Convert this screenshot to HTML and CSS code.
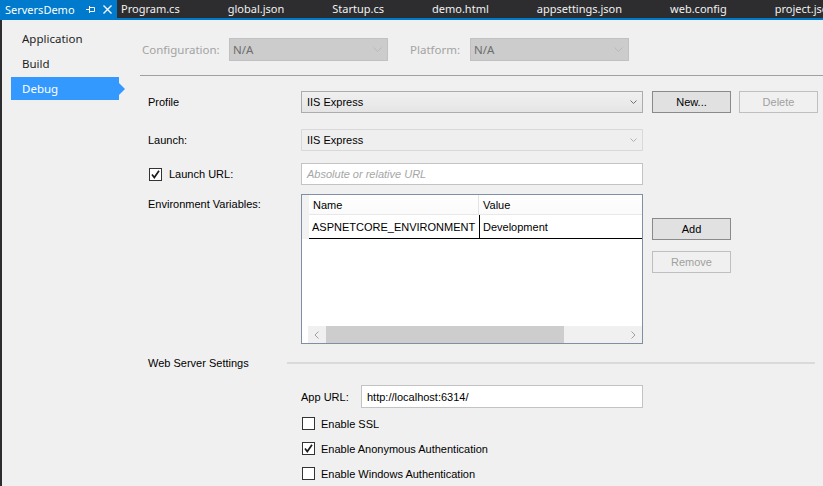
FILE: index.html
```html
<!DOCTYPE html>
<html>
<head>
<meta charset="utf-8">
<link rel="stylesheet" href="styles.css">
</head>
<body>
<div class="tabs">
  <div class="tab active">
    <span class="tab-title">ServersDemo</span>
    <svg class="pin" width="9" height="9" viewBox="0 0 9 9"><path d="M0 4.5H3.5M3.5 1V8M3.5 2.5H8.5V6.5H3.5" stroke="#fff" fill="none" stroke-width="1"/></svg>
    <svg class="close" width="9" height="9" viewBox="0 0 9 9"><path d="M0.5 0.5L8.5 8.5M8.5 0.5L0.5 8.5" stroke="#fff" stroke-width="1.3"/></svg>
  </div>
  <div class="tab">Program.cs</div>
  <div class="tab">global.json</div>
  <div class="tab">Startup.cs</div>
  <div class="tab">demo.html</div>
  <div class="tab">appsettings.json</div>
  <div class="tab">web.config</div>
  <div class="tab">project.json</div>
</div>
<div class="main">
  <nav class="nav">
    <div class="nav-item">Application</div>
    <div class="nav-item">Build</div>
    <div class="nav-item selected">Debug</div>
  </nav>
  <div class="page">
    <div class="config">
      <span class="cfg-label cfg-conf">Configuration:</span>
      <div class="combo-dis cfg-combo1"><span>N/A</span><svg width="9" height="5" viewBox="0 0 9 5"><path d="M0.5 0.5L4.5 4.5L8.5 0.5" stroke="#b9b9b9" fill="none"/></svg></div>
      <span class="cfg-label cfg-plat">Platform:</span>
      <div class="combo-dis cfg-combo2"><span>N/A</span><svg width="9" height="5" viewBox="0 0 9 5"><path d="M0.5 0.5L4.5 4.5L8.5 0.5" stroke="#b9b9b9" fill="none"/></svg></div>
    </div>
    <div class="sep"></div>
    <div class="form">
      <div class="row row-profile">
        <span class="lbl">Profile</span>
        <div class="combo"><span>IIS Express</span><svg width="7" height="4" viewBox="0 0 7 4"><path d="M0.5 0.5L3.5 3.5L6.5 0.5" stroke="#707070" fill="none"/></svg></div>
        <div class="btn btn-default">New...</div>
        <div class="btn btn-disabled btn-second">Delete</div>
      </div>
      <div class="row row-launch">
        <span class="lbl">Launch:</span>
        <div class="combo combo-ro"><span>IIS Express</span><svg width="7" height="4" viewBox="0 0 7 4"><path d="M0.5 0.5L3.5 3.5L6.5 0.5" stroke="#b0b0b0" fill="none"/></svg></div>
      </div>
      <div class="row row-url">
        <div class="lbl lbl-check">
          <span class="check on"><svg width="11" height="11" viewBox="0 0 11 11"><path d="M2 5.5L4.3 8.5L9 1.8" stroke="#1a1a1a" stroke-width="1.7" fill="none"/></svg></span>
          <span>Launch URL:</span>
        </div>
        <div class="textbox placeholder">Absolute or relative URL</div>
      </div>
      <div class="row row-env">
        <span class="lbl lbl-env">Environment Variables:</span>
        <div class="grid">
          <div class="ghead">
            <div class="rh"></div>
            <div class="gh gh-name">Name</div>
            <div class="gh gh-value">Value</div>
          </div>
          <div class="grow">
            <div class="rh"></div>
            <div class="gc gc-name">ASPNETCORE_ENVIRONMENT</div>
            <div class="gc gc-value">Development</div>
          </div>
          <div class="gspace"></div>
          <div class="hscroll">
            <div class="sarrow"><svg width="5" height="8" viewBox="0 0 5 8"><path d="M4.5 0.5L1 4L4.5 7.5" stroke="#a0a0a0" fill="none"/></svg></div>
            <div class="sthumb"></div>
            <div class="strack"></div>
            <div class="sarrow"><svg width="5" height="8" viewBox="0 0 5 8"><path d="M0.5 0.5L4 4L0.5 7.5" stroke="#a0a0a0" fill="none"/></svg></div>
          </div>
        </div>
        <div class="btn-col">
          <div class="btn btn-default">Add</div>
          <div class="btn btn-disabled">Remove</div>
        </div>
      </div>
      <div class="row row-ws">
        <span class="lbl lbl-ws">Web Server Settings</span>
        <div class="ws-line"></div>
      </div>
      <div class="row row-appurl">
        <span class="appurl-label">App URL:</span>
        <div class="textbox appurl">http://localhost:6314/</div>
      </div>
      <div class="row row-cb cb-ssl">
        <span class="check"></span><span class="cb-text">Enable SSL</span>
      </div>
      <div class="row row-cb cb-anon">
        <span class="check on"><svg width="11" height="11" viewBox="0 0 11 11"><path d="M2 5.5L4.3 8.5L9 1.8" stroke="#1a1a1a" stroke-width="1.7" fill="none"/></svg></span><span class="cb-text">Enable Anonymous Authentication</span>
      </div>
      <div class="row row-cb cb-win">
        <span class="check"></span><span class="cb-text">Enable Windows Authentication</span>
      </div>
    </div>
  </div>
</div>
</body>
</html>
```
FILE: styles.css
```css
* { box-sizing: border-box; }
html, body { margin: 0; padding: 0; }
body {
  width: 823px;
  height: 486px;
  overflow: hidden;
  background: #f0f0f0;
  font-family: "Liberation Sans", Arial, sans-serif;
  font-size: 11px;
  color: #000;
}

/* tab bar */
.tabs {
  display: flex;
  height: 20px;
  background: #2d2d30;
  border-bottom: 2px solid #007acc;
  font-family: "Noto Sans", sans-serif;
  font-size: 11px;
  color: #f1f1f1;
  line-height: 17px;
  white-space: nowrap;
  overflow: hidden;
}
.tab {
  padding: 0 44px 0 4px;
  flex: none;
}
.tab.active {
  width: 117px;
  background: #007acc;
  color: #fff;
  padding: 0 0 0 5px;
  display: flex;
  align-items: center;
}
.tab-title { width: 81px; }
.pin { margin-right: 8px; }

/* main area */
.main {
  display: flex;
  height: 466px;
  border-left: 2px solid #2d2d30;
}
.nav {
  width: 128px;
  flex: none;
  padding-top: 7px;
  font-family: "Noto Sans", sans-serif;
  font-size: 11.5px;
  color: #1e1e1e;
}
.nav-item {
  margin-left: 9px;
  width: 108px;
  height: 23px;
  line-height: 23px;
  padding-left: 11px;
  margin-bottom: 2px;
  position: relative;
}
.nav-item.selected {
  background: #3399ff;
  color: #fff;
}
.nav-item.selected::after {
  content: "";
  position: absolute;
  right: -6px;
  top: 6px;
  border-left: 6px solid #3399ff;
  border-top: 6px solid transparent;
  border-bottom: 6px solid transparent;
}

.page {
  flex: 1;
  padding-left: 10px;
}

/* configuration row */
.config {
  display: flex;
  align-items: center;
  margin-top: 18px;
  height: 23px;
  font-family: "Noto Sans", sans-serif;
  font-size: 11.5px;
}
.cfg-label { color: #a3a3a3; }
.cfg-conf { margin-left: 2px; width: 87px; }
.cfg-plat { margin-left: 22px; width: 60px; }
.combo-dis {
  height: 23px;
  background: #cccccc;
  border: 1px solid #c1c1c1;
  display: flex;
  align-items: center;
  justify-content: space-between;
  padding: 0 5px 0 3px;
  color: #6d6d6d;
}
.cfg-combo1 { width: 159px; }
.cfg-combo2 { width: 159px; }

.sep {
  margin-top: 14px;
  border-top: 1px solid #a0a0a0;
}

/* form */
.form { padding-left: 8px; }
.row {
  display: flex;
  align-items: center;
}
.lbl { width: 153px; flex: none; }
.row-profile { margin-top: 15px; height: 22px; }
.combo {
  width: 342px;
  height: 22px;
  border: 1px solid #acacac;
  background: linear-gradient(#f0f0f0, #e5e5e5);
  display: flex;
  align-items: center;
  justify-content: space-between;
  padding: 0 5px 0 5px;
}
.combo-ro {
  background: #efefef;
  border-color: #d9d9d9;
}
.btn {
  width: 79px;
  height: 22px;
  display: flex;
  align-items: center;
  justify-content: center;
  border: 1px solid #adadad;
  background: #e1e1e1;
  margin-left: 9px;
}
.btn-default { border-color: #8a8a8a; }
.btn-disabled {
  background: #f0f0f0;
  border-color: #bfbfbf;
  color: #a0a0a0;
}
.btn-second { margin-left: 8px; }

.row-launch { margin-top: 16px; height: 22px; }

.row-url { margin-top: 12px; height: 22px; }
.lbl-check { display: flex; align-items: center; }
.check {
  width: 13px;
  height: 13px;
  border: 1px solid #333;
  background: #fff;
  display: inline-flex;
  align-items: center;
  justify-content: center;
  flex: none;
}
.lbl-check .check { margin-left: 1px; margin-right: 7px; }
.textbox {
  width: 342px;
  height: 22px;
  border: 1px solid #c3c3c3;
  background: #fff;
  display: flex;
  align-items: center;
  padding-left: 5px;
}
.placeholder { color: #a6a6a6; font-style: italic; }

.row-env {
  margin-top: 9px;
  align-items: flex-start;
}
.lbl-env { padding-top: 4px; }
.grid {
  width: 342px;
  height: 150px;
  border: 1px solid #7f8fa6;
  background: #fff;
  display: flex;
  flex-direction: column;
}
.ghead { display: flex; height: 20px; }
.rh { width: 7px; flex: none; background: #f2f2f2; }
.gh {
  display: flex;
  align-items: center;
  padding-left: 4px;
  border-bottom: 1px solid #e8e8e8;
  background: linear-gradient(#ffffff, #fafafa);
}
.gh-name { width: 170px; border-right: 1px solid #e3e3e3; }
.gh-value { flex: 1; }
.grow { display: flex; height: 24px; }
.gc {
  display: flex;
  align-items: center;
  border-bottom: 1px solid #000;
}
.gc-name { width: 170px; padding-left: 3px; }
.gc-value { flex: 1; border-left: 1px solid #000; padding-left: 3px; }
.gspace { flex: 1; }
.hscroll {
  height: 17px;
  display: flex;
  background: #f0f0f0;
  margin-left: 6px;
}
.sarrow {
  width: 17px;
  display: flex;
  align-items: center;
  justify-content: center;
}
.sthumb {
  margin-left: 1px;
  width: 238px;
  background: #cdcdcd;
}
.strack { flex: 1; }

.btn-col {
  display: flex;
  flex-direction: column;
  margin-top: 24px;
}
.btn-col .btn + .btn { margin-top: 11px; }

.row-ws { margin-top: 12px; height: 14px; }
.lbl-ws { width: 139px; }
.ws-line {
  width: 528px;
  height: 2px;
  background: #dadada;
}

.row-appurl { margin-top: 15px; height: 23px; }
.appurl-label { margin-left: 153px; width: 60px; }
.appurl { width: 282px; height: 23px; color: #000; }

.row-cb { height: 13px; margin-left: 154px; }
.cb-text { margin-left: 6px; }
.cb-ssl { margin-top: 9px; }
.cb-anon { margin-top: 12px; }
.cb-win { margin-top: 12px; }
```
